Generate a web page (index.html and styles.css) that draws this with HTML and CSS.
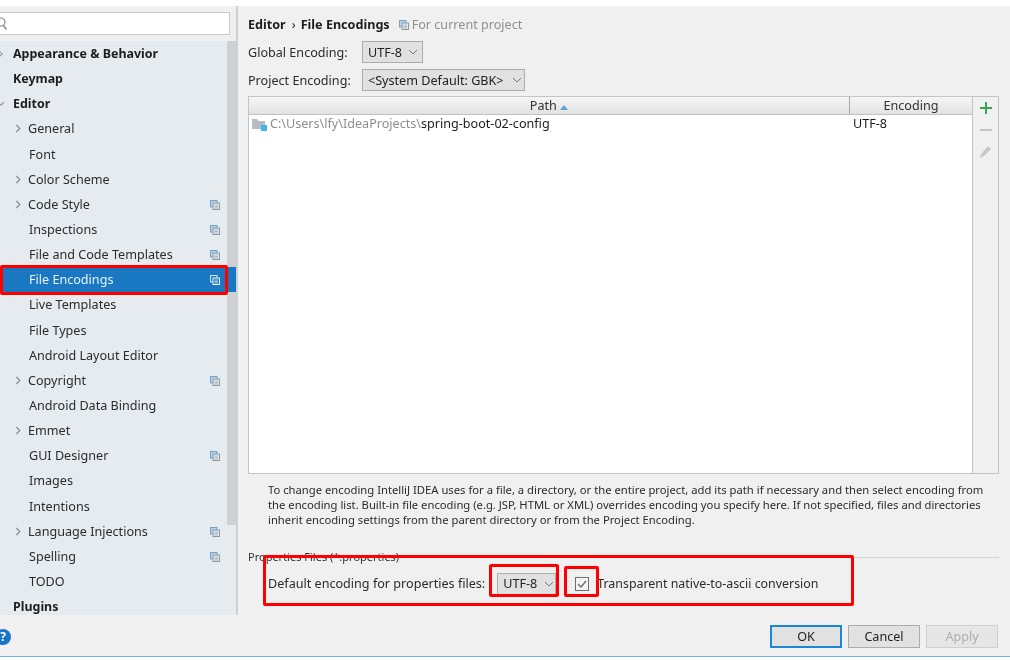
FILE: index.html
```html
<!DOCTYPE html>
<html lang="en">
<head>
<meta charset="utf-8">
<title>Settings - File Encodings</title>
<link rel="stylesheet" href="styles.css">
</head>
<body>
<svg width="0" height="0" class="defs">
  <symbol id="scope" viewBox="0 0 10 10">
    <rect x="0.5" y="0.5" width="6.5" height="6.5" fill="#b5d3ea" stroke="#6ea6cf"/>
    <rect x="3" y="3" width="6.5" height="6.5" fill="#e6ebf0" stroke="#8d979f"/>
    <path d="M4.500 5h3.500M4.500 6.500h3.500M4.500 8h3.500" stroke="#a0a8ae" stroke-width=".8"/>
  </symbol>
  <symbol id="scope-sel" viewBox="0 0 10 10">
    <rect x="0.5" y="0.5" width="6.5" height="6.5" fill="#1a78c2" stroke="#cfe4f4"/>
    <rect x="3" y="3" width="6.5" height="6.5" fill="#1a78c2" stroke="#eef6fb"/>
    <path d="M4.500 5h3.500M4.500 6.500h3.500M4.500 8h3.500" stroke="#cfe4f4" stroke-width=".8"/>
  </symbol>
  <symbol id="arrow" viewBox="0 0 8 10"><path d="M1.500 1l4 4-4 4" fill="none" stroke="#8a8f94" stroke-width="1.400"/></symbol>
  <symbol id="chev" viewBox="0 0 10 6"><path d="M1 1l4 4 4-4" fill="none" stroke="#777" stroke-width="1"/></symbol>
</svg>
<div class="window">
  <div class="main">
    <aside class="sidebar">
      <div class="search">
        <svg class="search-icon" width="12" height="14" viewBox="0 0 12 14"><circle cx="1" cy="5" r="4" fill="none" stroke="#888" stroke-width="1.200"/><path d="M3.500 8.500l3 4" stroke="#888" stroke-width="1.400"/></svg>
        <input class="search-input" type="text" aria-label="Search">
      </div>
      <div class="tree-wrap">
        <ul class="tree">
          <li class="row top"><svg class="root-arrow" width="6" height="8"><use href="#arrow"/></svg>Appearance &amp; Behavior</li>
          <li class="row top">Keymap</li>
          <li class="row top"><svg class="root-arrow open" width="6" height="8"><use href="#arrow"/></svg>Editor</li>
          <li class="row sub"><svg class="arrow" width="7" height="9"><use href="#arrow"/></svg>General</li>
          <li class="row leaf">Font</li>
          <li class="row sub"><svg class="arrow" width="7" height="9"><use href="#arrow"/></svg>Color Scheme</li>
          <li class="row sub"><svg class="arrow" width="7" height="9"><use href="#arrow"/></svg>Code Style<svg class="scope" width="10" height="10"><use href="#scope"/></svg></li>
          <li class="row leaf">Inspections<svg class="scope" width="10" height="10"><use href="#scope"/></svg></li>
          <li class="row leaf">File and Code Templates<svg class="scope" width="10" height="10"><use href="#scope"/></svg></li>
          <li class="row leaf selected">File Encodings<svg class="scope" width="10" height="10"><use href="#scope-sel"/></svg></li>
          <li class="row leaf">Live Templates</li>
          <li class="row leaf">File Types</li>
          <li class="row leaf">Android Layout Editor</li>
          <li class="row sub"><svg class="arrow" width="7" height="9"><use href="#arrow"/></svg>Copyright<svg class="scope" width="10" height="10"><use href="#scope"/></svg></li>
          <li class="row leaf">Android Data Binding</li>
          <li class="row sub"><svg class="arrow" width="7" height="9"><use href="#arrow"/></svg>Emmet</li>
          <li class="row leaf">GUI Designer<svg class="scope" width="10" height="10"><use href="#scope"/></svg></li>
          <li class="row leaf">Images</li>
          <li class="row leaf">Intentions</li>
          <li class="row sub"><svg class="arrow" width="7" height="9"><use href="#arrow"/></svg>Language Injections<svg class="scope" width="10" height="10"><use href="#scope"/></svg></li>
          <li class="row leaf">Spelling<svg class="scope" width="10" height="10"><use href="#scope"/></svg></li>
          <li class="row leaf">TODO</li>
          <li class="row top">Plugins</li>
        </ul>
        <div class="scrollbar"><div class="thumb"></div></div>
      </div>
    </aside>
    <section class="content">
      <h1 class="crumb">Editor<span class="sep">›</span>File Encodings<span class="project"><svg width="10" height="10" class="crumb-scope"><use href="#scope"/></svg>For current project</span></h1>
      <div class="field"><span class="label">Global Encoding:</span><span class="combo narrow">UTF-8<svg width="10" height="6"><use href="#chev"/></svg></span></div>
      <div class="field second"><span class="label">Project Encoding:</span><span class="combo wide">&lt;System Default: GBK&gt;<svg width="10" height="6"><use href="#chev"/></svg></span></div>
      <div class="table-wrap">
        <div class="table">
          <div class="thead">
            <div class="th path">Path <svg width="8" height="5" viewBox="0 0 8 5"><path d="M0 5l4-5 4 5z" fill="#5aa5d6"/></svg></div>
            <div class="th enc">Encoding</div>
          </div>
          <div class="tr">
            <div class="td path"><svg class="folder" width="15" height="13" viewBox="0 0 15 13"><path d="M0 1h5l1.500 2H13v8H0z" fill="#b5bcc2"/><rect x="9" y="7" width="6" height="6" fill="#40b6e8"/></svg><span class="muted">C:\Users\lfy\IdeaProjects\</span>spring-boot-02-config</div>
            <div class="td enc">UTF-8</div>
          </div>
        </div>
        <div class="tools">
          <svg width="14" height="14" viewBox="0 0 14 14"><path d="M7 1v12M1 7h12" stroke="#3aa655" stroke-width="2"/></svg>
          <svg width="14" height="14" viewBox="0 0 14 14"><path d="M1 7h12" stroke="#c4c4c4" stroke-width="2"/></svg>
          <svg width="14" height="14" viewBox="0 0 14 14"><path d="M1 13l1-4 7-8 3 3-7 7z" fill="#c8c8c8"/></svg>
        </div>
      </div>
      <p class="note">To change encoding IntelliJ IDEA uses for a file, a directory, or the entire project, add its path if necessary and then select encoding from the encoding list. Built-in file encoding (e.g. JSP, HTML or XML) overrides encoding you specify here. If not specified, files and directories inherit encoding settings from the parent directory or from the Project Encoding.</p>
      <div class="legend"><span>Properties Files (*.properties)</span><i class="legend-line"></i></div>
      <div class="props">
        <span class="label">Default encoding for properties files:</span>
        <span class="combo small">UTF-8<svg width="10" height="6"><use href="#chev"/></svg></span>
        <span class="check"><svg width="14" height="14" viewBox="0 0 14 14"><rect x=".5" y=".5" width="13" height="13" fill="#f4f4f4" stroke="#707070"/><path d="M3 7l3 3 5-6" fill="none" stroke="#666" stroke-width="1.200"/></svg></span>
        <span class="label transparent">Transparent native-to-ascii conversion</span>
      </div>
    </section>
  </div>
  <footer class="footer">
    <span class="help">?</span>
    <div class="buttons">
      <button class="btn default">OK</button>
      <button class="btn">Cancel</button>
      <button class="btn disabled">Apply</button>
    </div>
  </footer>
</div>
<div class="mark m-sel"></div>
<div class="mark m-props"></div>
<div class="mark m-combo"></div>
<div class="mark m-check"></div>
</body>
</html>
```
FILE: styles.css
```css
* { box-sizing: border-box; }
html, body { margin: 0; padding: 0; background: #fff; }
body {
  width: 1010px; height: 660px; overflow: hidden; position: relative;
  font-family: "Noto Sans", "Open Sans", sans-serif; font-size: 12.6px; color: #2b2b2b;
  filter: blur(0.35px);
}
.defs { position: absolute; }
.window { margin-top: 6px; height: 651px; background: #f0f0f0; border-bottom: 1px solid #6db4f2; display: flex; flex-direction: column; }
.main { display: flex; height: 609px; }

.sidebar { width: 238px; background: #e6ebf0; border-right: 2px solid #cdd1d4; display: flex; flex-direction: column; }
.search { height: 35px; padding: 6px 6px 6px 0; display: flex; background: #f0f0f0; position: relative; }
.search-input { width: 100%; height: 23px; border: 1px solid #c8c8c8; border-left: 0; background: #fff; }
.search-icon { position: absolute; left: 0; top: 11px; }
.tree-wrap { flex: 1; display: flex; min-height: 0; }
.tree { list-style: none; margin: 0; padding: 0; flex: 1; min-width: 0; }
.row { height: 25.15px; line-height: 25px; display: flex; align-items: center; white-space: nowrap; position: relative; }
.top { font-weight: 700; font-size: 12.45px; color: #1d1d1d; padding-left: 13px; }
.sub { padding-left: 15px; }
.leaf { padding-left: 29px; }
.arrow { margin-right: 6px; flex: none; }
.root-arrow { position: absolute; left: -2px; top: 9px; }
.root-arrow.open { transform: rotate(90deg); }
.scope { position: absolute; right: 7px; top: 8px; }
.selected { background: #1a78c2; color: #e8f2fa; margin-right: -9px; }
.selected .scope { right: 16px; }
.scrollbar { width: 9px; flex: none; background: #e6ebf0; }
.thumb { height: 484px; background: #cdd1d4; }

.content { flex: 1; min-width: 0; padding: 0 11px 0 10px; }
.crumb { margin: 9px 0 0; height: 19px; line-height: 19px; font-size: 12.6px; font-weight: 700; color: #1d1d1d; white-space: nowrap; display: flex; align-items: center; }
.sep { font-weight: 400; margin: 0 5px 0 6px; }
.project { font-weight: 400; color: #8f8f8f; margin-left: 9px; }
.crumb-scope { margin-right: 3px; vertical-align: -1px; }
.field { display: flex; align-items: center; height: 22px; margin-top: 7px; }
.field.second { margin-top: 6px; }
.label { white-space: nowrap; }
.field .label { width: 114px; }
.combo { display: inline-flex; align-items: center; justify-content: space-between; height: 22px; padding: 0 4px 0 5px; background: #e1e1e1; border: 1px solid #adadad; white-space: nowrap; color: #222; }
.combo.narrow { width: 61px; }
.combo.wide { width: 163px; padding-right: 2px; }
.table-wrap { display: flex; height: 378px; margin-top: 5px; }
.table { width: 726px; background: #fff; border: 1px solid #c4c4c4; }
.thead { display: flex; height: 18px; background: linear-gradient(#f6f6f6, #e2e2e2); border-bottom: 1px solid #c2c2c2; }
.th { line-height: 17px; text-align: center; color: #333; }
.th.path { width: 601px; border-right: 1px solid #a8a8a8; }
.th.enc { flex: 1; }
.tr { display: flex; height: 18px; line-height: 18px; color: #1c1c1c; }
.td.path { width: 601px; padding-left: 3px; display: flex; align-items: center; white-space: nowrap; }
.td.enc { padding-left: 3px; }
.folder { margin-right: 3px; flex: none; }
.muted { color: #8d8d8d; }
.tools { width: 26px; border: 1px solid #c4c4c4; border-left: 0; display: flex; flex-direction: column; align-items: center; gap: 8px; padding-top: 4px; }
.note { margin: 8px 0 0 20px; font-size: 11.25px; line-height: 15px; color: #2b2b2b; width: 730px; }
.legend { display: flex; align-items: center; margin-top: 22px; height: 16px; line-height: 16px; font-size: 11px; gap: 2px; white-space: nowrap; color: #333; }
.legend-line { flex: 1; height: 1px; background: #d5d5d5; }
.props { display: flex; align-items: center; margin-top: 7px; padding-left: 20px; height: 23px; }
.combo.small { margin-left: 12px; width: 59px; padding-right: 1px; }
.check { display: inline-flex; margin-left: 19px; margin-right: 8px; }
.transparent { font-size: 12.4px; }

.footer { flex: 1; display: flex; align-items: flex-start; justify-content: space-between; padding: 10px 12px 0 0; }
.help { width: 16px; height: 16px; margin: 4px 0 0 -5px; border-radius: 50%; background: #1875c8; color: #fff; font-weight: 700; font-size: 12px; line-height: 16px; text-align: center; }
.buttons { display: flex; gap: 6px; }
.btn { width: 72px; height: 23px; padding: 0; font: inherit; background: #e1e1e1; border: 1px solid #adadad; color: #222; }
.btn.default { border: 2px solid #1b87d9; }
.btn.disabled { background: #e6e6e6; border-color: #cfcfcf; color: #adadad; }

.mark { position: absolute; border: 3px solid #f00; border-radius: 2px; pointer-events: none; }
.m-sel { left: 0; top: 265px; width: 228px; height: 30px; }
.m-props { left: 263px; top: 555px; width: 591px; height: 51px; }
.m-combo { left: 489px; top: 564px; width: 70px; height: 33px; }
.m-check { left: 564px; top: 566px; width: 35px; height: 31px; }
```
